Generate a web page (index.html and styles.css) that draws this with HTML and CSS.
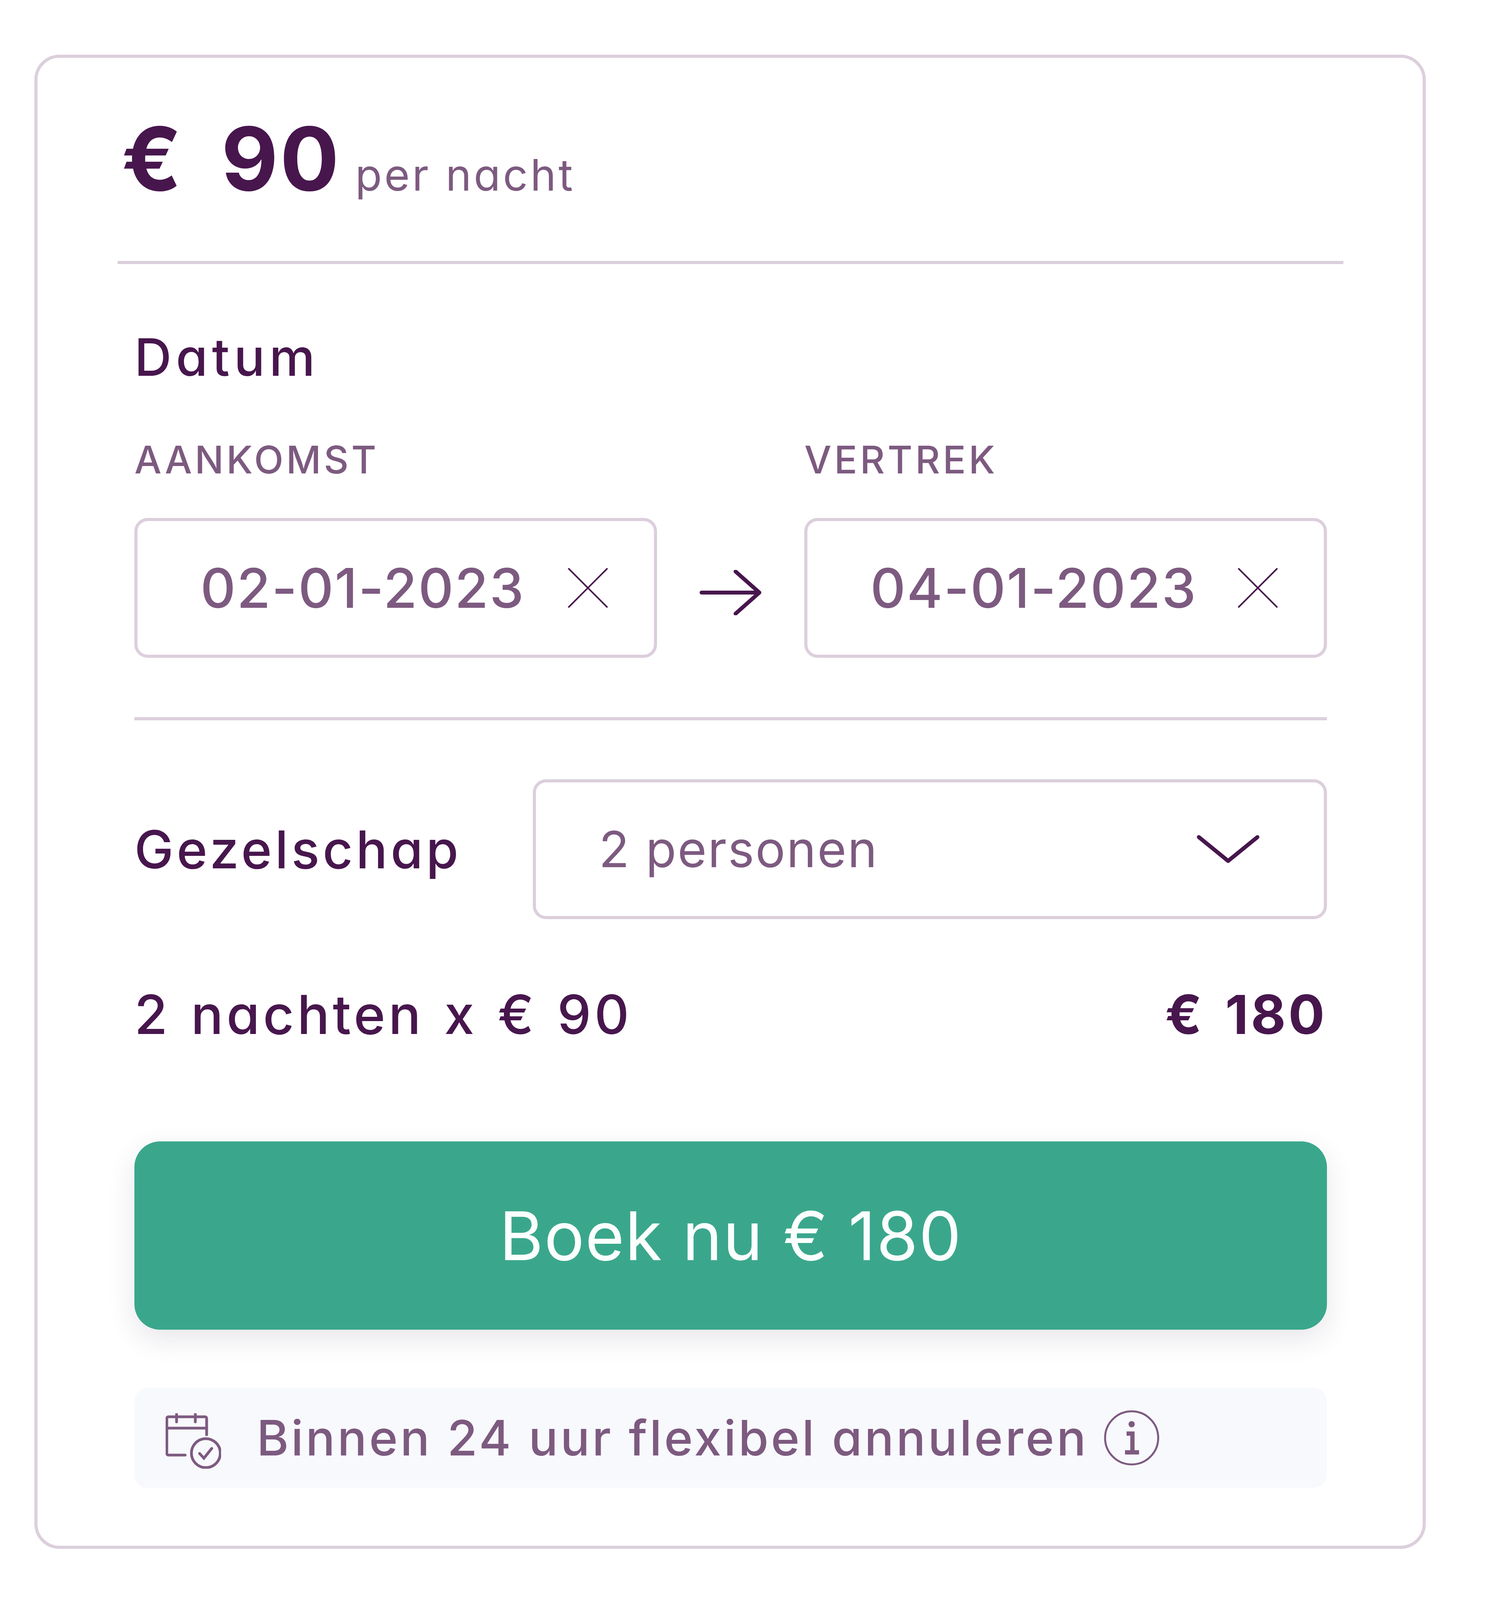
FILE: index.html
```html
<!DOCTYPE html>
<html lang="nl">
<head>
<meta charset="utf-8">
<title>Boeking</title>
<link rel="stylesheet" href="styles.css">
</head>
<body>
<section class="card">
  <header class="price-head">
    <span class="price">€ 90</span>
    <span class="per">per nacht</span>
  </header>
  <div class="body">
    <h2 class="date-title">Datum</h2>
    <div class="dates">
      <div class="date-col">
        <label class="cap-label">AANKOMST</label>
        <div class="field date-field">
          <span class="date-text">02-01-2023</span>
          <svg class="x-icon" viewBox="0 0 104 104"><path d="M2 2L102 102M102 2L2 102"/></svg>
        </div>
      </div>
      <svg class="arrow" viewBox="0 0 160 116"><path d="M5 58H153M92 4L153 58L92 112"/></svg>
      <div class="date-col">
        <label class="cap-label">VERTREK</label>
        <div class="field date-field">
          <span class="date-text">04-01-2023</span>
          <svg class="x-icon" viewBox="0 0 104 104"><path d="M2 2L102 102M102 2L2 102"/></svg>
        </div>
      </div>
    </div>
    <div class="rule"></div>
    <div class="party">
      <span class="party-label">Gezelschap</span>
      <div class="field select">
        <span class="select-text">2 personen</span>
        <svg class="chevron" viewBox="0 0 160 72"><path d="M5 5L80 66L155 5"/></svg>
      </div>
    </div>
    <div class="sum">
      <span class="sum-label">2 nachten x € 90</span>
      <span class="sum-total">€ 180</span>
    </div>
    <button class="book">Boek nu € 180</button>
    <div class="note">
      <svg class="cal" viewBox="0 0 142 142">
        <path class="thin" d="M50 107H7a4 4 0 0 1-4-4V13a4 4 0 0 1 4-4H101a4 4 0 0 1 4 4V55"/>
        <path class="thin" d="M3 38H105M28 2V22M76 2V22"/>
        <circle class="thin" cx="103" cy="102" r="37"/>
        <path class="thin" d="M87 103L98 115L118 90"/>
      </svg>
      <span class="note-text">Binnen 24 uur flexibel annuleren</span>
      <svg class="info" viewBox="0 0 142 142">
        <circle class="info-ring" cx="71" cy="71" r="68"/>
        <circle class="info-dot" cx="71" cy="36" r="8"/>
        <path class="info-stem" d="M58 60H73V108M54 108H90"/>
      </svg>
    </div>
  </div>
</section>
</body>
</html>
```

FILE: styles.css
```css
* { box-sizing: border-box; }
html, body { margin: 0; padding: 0; background: #fff; }
body {
  width: 3840px;
  padding: 140px 0 131px 88px;
  font-family: Inter, "Noto Sans", sans-serif;
  font-feature-settings: "cv11" 1, "ss03" 1;
  color: #47164d;
}
.card {
  width: 3562px;
  border: 8px solid #dccfdc;
  border-radius: 64px;
  padding: 0 203px 148px 205px;
}
.price-head {
  display: flex;
  align-items: baseline;
  gap: 37px;
  height: 528px;
  padding: 163px 0 0 10px;
  border-bottom: 8px solid #dccfdc;
}
.price { font-size: 225px; font-weight: 700; line-height: 190px; letter-spacing: 4px; word-spacing: 40px; }
.per { font-size: 112px; font-weight: 400; color: #7d5a80; line-height: 190px; letter-spacing: 6px; }
.body { padding: 0 42px 0 43px; }
.date-title {
  margin: 158px 0 0;
  font-size: 132px;
  font-weight: 500;
  line-height: 160px;
  letter-spacing: 11px;
}
.dates {
  display: grid;
  grid-template-columns: 1338px 1fr 1338px;
  margin-top: 128px;
  align-items: end;
}
.cap-label {
  display: block;
  font-size: 98px;
  line-height: 110px;
  letter-spacing: 7px;
  font-weight: 500;
  color: #7d5a80;
  margin-bottom: 94px;
}
.field {
  display: flex;
  align-items: center;
  border: 8px solid #dccfdc;
  border-radius: 34px;
  background: #fff;
}
.date-field { height: 358px; padding: 0 117px 0 161px; justify-content: space-between; }
.date-text { font-size: 140px; font-weight: 500; color: #7d5a80; line-height: 160px; letter-spacing: 3px; }
.x-icon { width: 104px; height: 104px; flex: none; fill: none; stroke: #47164d; stroke-width: 4; }
.arrow {
  width: 160px;
  height: 116px;
  justify-self: center;
  align-self: end;
  margin-bottom: 109px;
  fill: none;
  stroke: #47164d;
  stroke-width: 10;
  stroke-linecap: round;
  stroke-linejoin: round;
}
.rule { height: 8px; background: #dccfdc; margin-top: 152px; }
.party {
  display: flex;
  align-items: center;
  justify-content: space-between;
  margin-top: 151px;
}
.party-label { font-size: 134px; font-weight: 500; line-height: 160px; letter-spacing: 8px; }
.select {
  width: 2033px;
  height: 358px;
  padding: 0 165px 0 161px;
  justify-content: space-between;
}
.select-text { font-size: 128px; font-weight: 400; color: #7d5a80; line-height: 160px; letter-spacing: 3px; }
.chevron { width: 160px; height: 72px; flex: none; fill: none; stroke: #47164d; stroke-width: 10; stroke-linejoin: round; stroke-linecap: round; }
.sum {
  display: flex;
  align-items: center;
  justify-content: space-between;
  margin-top: 164px;
  height: 160px;
}
.sum-label { font-size: 138px; font-weight: 500; line-height: 160px; letter-spacing: 8px; word-spacing: 7px; }
.sum-total { font-size: 138px; font-weight: 700; line-height: 160px; letter-spacing: 6px; word-spacing: 15px; }
.book {
  display: block;
  width: 100%;
  height: 482px;
  margin-top: 245px;
  border: 0;
  border-radius: 66px;
  background: #3aa78c;
  color: #fbfffd;
  font: inherit;
  font-size: 172px;
  font-weight: 400;
  letter-spacing: 2px;
  font-feature-settings: inherit;
  box-shadow: 0 24px 70px rgba(60, 40, 70, 0.12);
}
.note {
  display: flex;
  align-items: center;
  height: 256px;
  margin-top: 149px;
  padding-left: 80px;
  border-radius: 34px;
  background: #f8f9fd;
}
.cal { width: 142px; height: 142px; flex: none; margin-top: 16px; fill: none; }
.thin { fill: none; stroke: #7d5a80; stroke-width: 7; stroke-linecap: round; }
.note-text {
  margin-left: 91px;
  font-size: 125px;
  font-weight: 500;
  color: #7d5a80;
  line-height: 160px;
  letter-spacing: 6px;
}
.info { width: 142px; height: 142px; flex: none; margin-left: 40px; }
.info-ring { fill: none; stroke: #7d5a80; stroke-width: 5; }
.info-dot { fill: #7d5a80; }
.info-stem { fill: none; stroke: #7d5a80; stroke-width: 11; }
```
